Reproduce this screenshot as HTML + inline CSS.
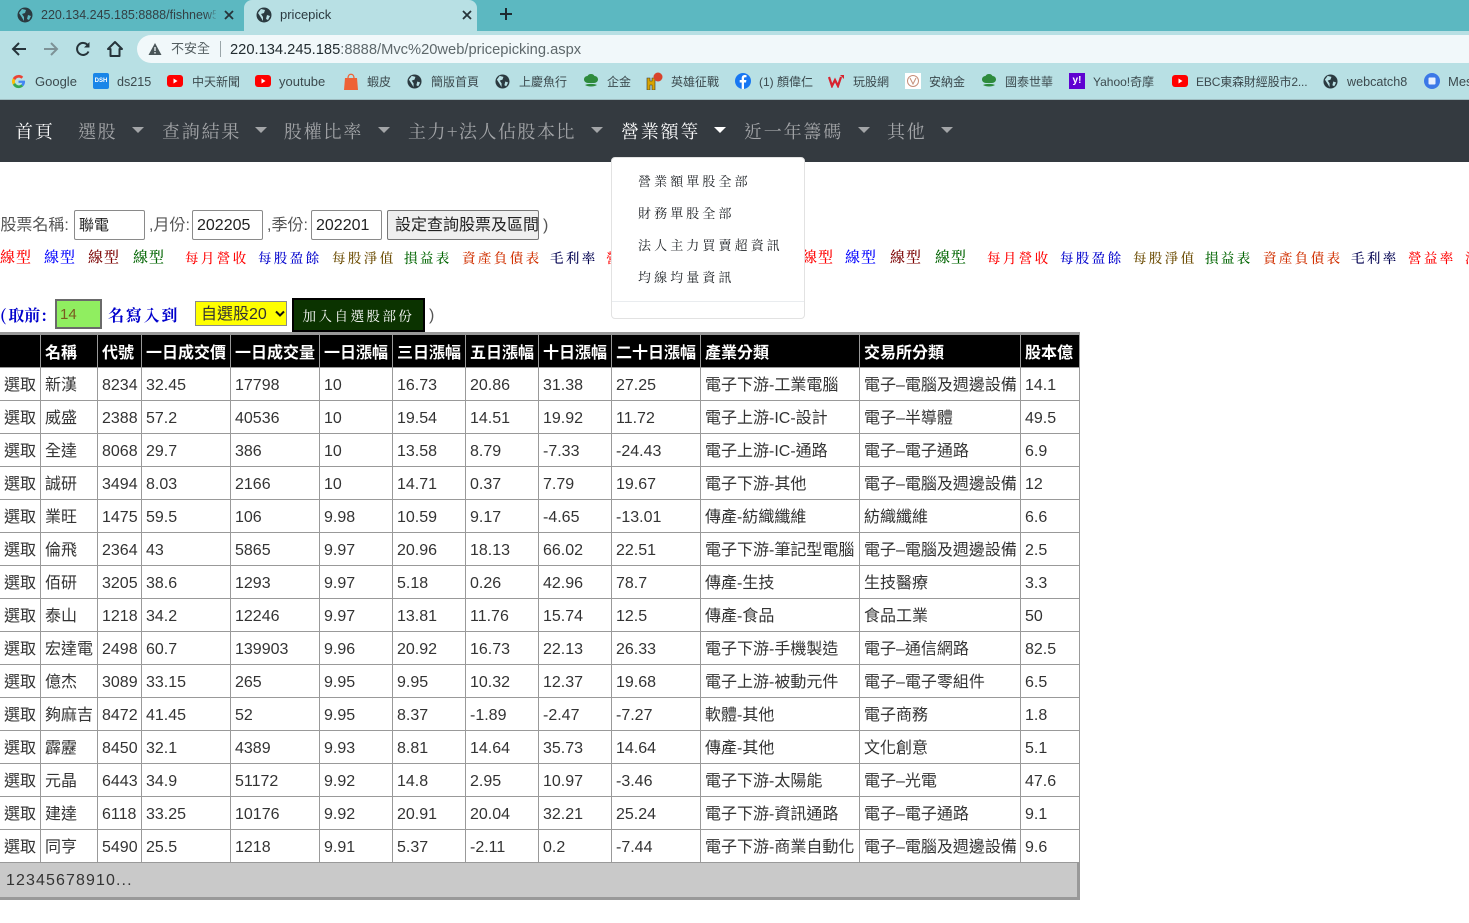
<!DOCTYPE html>
<html lang="zh-Hant"><head><meta charset="utf-8"><title>pricepick</title>
<style>
html,body{margin:0;padding:0;width:1469px;height:923px;overflow:hidden;background:#fff}
body{position:relative;font-family:"Liberation Sans","Noto Sans CJK TC",sans-serif;color:#212529}
.a{position:absolute;white-space:nowrap}
svg{position:absolute;display:block}
.bm{position:absolute;top:74px;font-size:12px;line-height:16px;color:#3c4a4e;white-space:nowrap}
.bl{font-size:13px}
.nav{position:absolute;top:119px;font:18px/24px "Noto Serif CJK TC","Noto Serif CJK SC",serif;letter-spacing:1.8px;color:#a3a5a8;white-space:nowrap}
.car{position:absolute;top:127px;width:0;height:0;border-left:6px solid transparent;border-right:6px solid transparent;border-top:6px solid #a3a5a8}
.dd{position:absolute;left:638px;font:13px/18px "Noto Serif CJK TC","Noto Serif CJK SC",serif;letter-spacing:3.1px;color:#212529;white-space:nowrap}
.lk{position:absolute;top:248px;font:500 13.5px/18px "Noto Serif CJK TC","Noto Serif CJK SC",serif;letter-spacing:2.4px;white-space:nowrap}
.ul{font-size:15px;letter-spacing:1px}
.box{position:absolute;top:210px;height:30px;border:1px solid #8a8a8a;border-radius:2px;background:#fff;font-size:16px;line-height:30px;padding-left:4px;color:#222;white-space:nowrap;box-sizing:border-box}
table{position:absolute;left:-2px;top:335px;border-collapse:collapse;table-layout:fixed;width:1081px;font-size:16px;line-height:20px}
td,th{border:1px solid #999;padding:4px 0 0 4px;white-space:nowrap;overflow:hidden;text-align:left;font-weight:400;color:#333;box-sizing:border-box;vertical-align:middle}
td:first-child{padding-left:5px}
td{height:33px;background:#fff}
th{height:32px;background:#000;color:#fff;font-weight:700;border-top:0;padding-top:6px}
</style></head><body>

<!-- browser chrome -->
<div class="a" style="left:0;top:0;width:1469px;height:31px;background:#5cb8c1"></div>
<div class="a" style="left:0;top:31px;width:1469px;height:69px;background:#b8e0e4"></div>
<div class="a" style="left:244px;top:0;width:233px;height:31px;background:#b8e0e4;border-radius:8px 8px 0 0"></div>

<svg style="left:17px;top:7px" width="16" height="16" viewBox="0 0 16 16"><circle cx="8" cy="8" r="7.5" fill="#2b3a40"/><path d="M5 2l4 1-1 3-3 1 2 3v4L4 9 2 6zM11 8l3 1-2 4-2-1z" fill="#5cb8c1"/></svg>
<div class="a" style="left:41px;top:7px;width:175px;overflow:hidden;font-size:12.5px;line-height:16px;color:#333f43">220.134.245.185:8888/fishnew5</div>
<div class="a" style="left:206px;top:5px;width:12px;height:20px;background:linear-gradient(90deg,rgba(92,184,193,0),#5cb8c1)"></div>
<svg style="left:224px;top:10px" width="10" height="10" viewBox="0 0 10 10"><path d="M1 1l8 8M9 1l-8 8" stroke="#26343a" stroke-width="1.800"/></svg>
<svg style="left:256px;top:7px" width="16" height="16" viewBox="0 0 16 16"><circle cx="8" cy="8" r="7.5" fill="#2b3a40"/><path d="M5 2l4 1-1 3-3 1 2 3v4L4 9 2 6zM11 8l3 1-2 4-2-1z" fill="#b8e0e4"/></svg>
<div class="a" style="left:280px;top:7px;font-size:13px;line-height:16px;color:#2b3a40">pricepick</div>
<svg style="left:462px;top:10px" width="10" height="10" viewBox="0 0 10 10"><path d="M1 1l8 8M9 1l-8 8" stroke="#26343a" stroke-width="1.800"/></svg>
<svg style="left:499px;top:7px" width="14" height="14" viewBox="0 0 14 14"><path d="M7 1v12M1 7h12" stroke="#1d2a30" stroke-width="2"/></svg>

<svg style="left:10px;top:40px" width="18" height="18" viewBox="0 0 18 18"><path d="M16 9H3M9 3L3 9l6 6" fill="none" stroke="#26343a" stroke-width="2"/></svg>
<svg style="left:42px;top:40px" width="18" height="18" viewBox="0 0 18 18"><path d="M2 9h13M9 3l6 6-6 6" fill="none" stroke="#7d9296" stroke-width="2"/></svg>
<svg style="left:74px;top:40px" width="18" height="18" viewBox="0 0 18 18"><path d="M14.500 11.500A6 6 0 1 1 14 5.500" fill="none" stroke="#26343a" stroke-width="2"/><path d="M15.500 2v5.500H10z" fill="#26343a"/></svg>
<svg style="left:106px;top:40px" width="18" height="18" viewBox="0 0 18 18"><path d="M9 2L2 9h2.500v7h9V9H16z" fill="none" stroke="#26343a" stroke-width="2" stroke-linejoin="round"/></svg>

<div class="a" style="left:137px;top:35px;width:1345px;height:28px;background:#f1f8fa;border-radius:14px"></div>
<svg style="left:148px;top:42px" width="14" height="14" viewBox="0 0 14 14"><path d="M7 1l6.500 12H.5z" fill="#4a5558"/><path d="M7 5v4M7 10v1.500" stroke="#f1f8fa" stroke-width="1.300"/></svg>
<div class="a" style="left:171px;top:41px;font-size:13px;line-height:16px;color:#555f62">不安全</div>
<div class="a" style="left:220px;top:41px;width:1px;height:16px;background:#9aa5a8"></div>
<div class="a" style="left:230px;top:41px;font-size:14.700px;line-height:18px;color:#5e686b"><span style="color:#222c30">220.134.245.185</span>:8888/Mvc%20web/pricepicking.aspx</div>

<!-- bookmarks -->
<svg style="left:11px;top:74px" width="15" height="15" viewBox="0 0 16 16"><path d="M8 1a7 7 0 0 1 5 2L11 5a4 4 0 0 0-6.500 1.500L2 4.500A7 7 0 0 1 8 1z" fill="#ea4335"/><path d="M2 4.500l2.500 2a4 4 0 0 0 0 3L2 11.500a7 7 0 0 1 0-7z" fill="#fbbc05"/><path d="M2 11.500l2.500-2A4 4 0 0 0 11 11l2 2a7 7 0 0 1-11-1.500z" fill="#34a853"/><path d="M15 8c0 2-.7 3.700-2 5l-2-2a3 3 0 0 0 1-1.500H8V7h6.800z" fill="#4285f4"/></svg>
<div class="bm bl" style="left:35px">Google</div>
<div class="a" style="left:93px;top:73px;width:16px;height:16px;background:#1a86e8;border-radius:2px;color:#fff;font-size:6px;font-weight:700;line-height:16px;text-align:center">DSH</div>
<div class="bm" style="left:117px;font-size:12.600px">ds215</div>
<svg style="left:167px;top:75px" width="16" height="12" viewBox="0 0 16 12"><rect width="16" height="12" rx="3" fill="#f00"/><path d="M6.500 3.500v5l4-2.500z" fill="#fff"/></svg>
<div class="bm" style="left:192px">中天新聞</div>
<svg style="left:255px;top:75px" width="16" height="12" viewBox="0 0 16 12"><rect width="16" height="12" rx="3" fill="#f00"/><path d="M6.500 3.500v5l4-2.500z" fill="#fff"/></svg>
<div class="bm bl" style="left:279px">youtube</div>
<svg style="left:344px;top:73px" width="14" height="17" viewBox="0 0 14 17"><path d="M1 5h12l1 12H0z" fill="#ee6236"/><path d="M4 5c0-5 6-5 6 0" fill="none" stroke="#ee6236" stroke-width="1.300"/></svg>
<div class="bm" style="left:367px">蝦皮</div>
<svg style="left:495px;top:74px" width="15" height="15" viewBox="0 0 16 16"><circle cx="8" cy="8" r="7.500" fill="#2b3a40"/><path d="M5 2l4 1-1 3-3 1 2 3v4L4 9 2 6zM11 8l3 1-2 4-2-1z" fill="#b8e0e4"/></svg>
<svg style="left:407px;top:74px" width="15" height="15" viewBox="0 0 16 16"><circle cx="8" cy="8" r="7.500" fill="#2b3a40"/><path d="M5 2l4 1-1 3-3 1 2 3v4L4 9 2 6zM11 8l3 1-2 4-2-1z" fill="#b8e0e4"/></svg>
<div class="bm" style="left:431px">簡版首頁</div>
<div class="bm" style="left:519px">上慶魚行</div>
<svg style="left:583px;top:74px" width="16" height="14" viewBox="0 0 16 14"><path d="M8 0c2 0 3 1 3.500 2 2 0 3.500 1.500 3.500 3.500S13 9 11 9H5C3 9 1 7.500 1 5.500S2.500 2 4.500 2C5 1 6 0 8 0z" fill="#2e8b3d"/><path d="M2 11c3-1.500 9-1.500 12 0-3 2-9 2-12 0z" fill="#2e8b3d"/></svg>
<div class="bm" style="left:607px">企金</div>
<svg style="left:646px;top:72px" width="17" height="18" viewBox="0 0 17 18"><path d="M1 6h3v3h2V6h3v12H6v-5H4v5H1z" fill="#d9a400" stroke="#333" stroke-width=".6"/><circle cx="12" cy="5" r="4.500" fill="#d8432b"/></svg>
<div class="bm" style="left:671px">英雄征戰</div>
<svg style="left:735px;top:73px" width="16" height="16" viewBox="0 0 16 16"><circle cx="8" cy="8" r="8" fill="#1877f2"/><path d="M9 16V9.500h2l.4-2.500H9V5.500c0-.8.3-1.200 1.300-1.200h1.200V2.100A12 12 0 0 0 9.800 2C8 2 6.700 3.100 6.700 5.200V7H4.700v2.500h2V16z" fill="#fff"/></svg>
<div class="bm" style="left:759px">(1) 顏偉仁</div>
<svg style="left:828px;top:74px" width="17" height="14" viewBox="0 0 17 14"><path d="M1 3l3 9 3-6 3 6 3-9" fill="none" stroke="#d8232f" stroke-width="2.200"/><path d="M12 1h4v4z" fill="#d8232f"/></svg>
<div class="bm" style="left:853px">玩股網</div>
<div class="a" style="left:905px;top:73px;width:16px;height:16px;background:#fff"></div>
<svg style="left:905px;top:73px" width="16" height="16" viewBox="0 0 16 16"><circle cx="8" cy="8" r="5.500" fill="none" stroke="#c58f7a"/><path d="M5 5l3 6 3-6" fill="none" stroke="#c58f7a"/></svg>
<div class="bm" style="left:929px">安納金</div>
<svg style="left:981px;top:74px" width="16" height="14" viewBox="0 0 16 14"><path d="M8 0c2 0 3 1 3.500 2 2 0 3.500 1.500 3.500 3.500S13 9 11 9H5C3 9 1 7.500 1 5.500S2.500 2 4.500 2C5 1 6 0 8 0z" fill="#2e8b3d"/><path d="M2 11c3-1.500 9-1.500 12 0-3 2-9 2-12 0z" fill="#2e8b3d"/></svg>
<div class="bm" style="left:1005px">國泰世華</div>
<div class="a" style="left:1069px;top:73px;width:16px;height:16px;background:#5f01d1;color:#fff;font-size:10px;font-weight:700;line-height:16px;text-align:center">y!</div>
<div class="bm" style="left:1093px">Yahoo!奇摩</div>
<svg style="left:1172px;top:75px" width="16" height="12" viewBox="0 0 16 12"><rect width="16" height="12" rx="3" fill="#f00"/><path d="M6.500 3.500v5l4-2.500z" fill="#fff"/></svg>
<div class="bm" style="left:1196px;letter-spacing:-.15px">EBC東森財經股市2...</div>
<svg style="left:1323px;top:74px" width="15" height="15" viewBox="0 0 16 16"><circle cx="8" cy="8" r="7.500" fill="#2b3a40"/><path d="M5 2l4 1-1 3-3 1 2 3v4L4 9 2 6zM11 8l3 1-2 4-2-1z" fill="#b8e0e4"/></svg>
<div class="bm" style="left:1347px;font-size:12.600px">webcatch8</div>
<svg style="left:1424px;top:73px" width="16" height="16" viewBox="0 0 16 16"><circle cx="8" cy="8" r="8" fill="#3b78e7"/><rect x="4.500" y="4.500" width="7" height="7" rx="1" fill="#e8f0fe"/></svg>
<div class="bm bl" style="left:1448px">Mes</div>
<div class="a" style="left:0;top:99px;width:1469px;height:1px;background:#9fbcc0"></div>

<!-- navbar -->
<div class="a" style="left:0;top:100px;width:1469px;height:62px;background:#343a40"></div>
<div class="nav" style="left:15px;color:#fff">首頁</div>
<div class="nav" style="left:78px">選股</div><div class="car" style="left:132px"></div>
<div class="nav" style="left:162px">查詢結果</div><div class="car" style="left:255px"></div>
<div class="nav" style="left:284px">股權比率</div><div class="car" style="left:378px"></div>
<div class="nav" style="left:408px;letter-spacing:1.500px">主力+法人佔股本比</div><div class="car" style="left:591px"></div>
<div class="nav" style="left:621px;color:#fff">營業額等</div><div class="car" style="left:714px;border-top-color:#fff"></div>
<div class="nav" style="left:744px">近一年籌碼</div><div class="car" style="left:858px"></div>
<div class="nav" style="left:887px">其他</div><div class="car" style="left:941px"></div>

<!-- form row -->
<div class="a" style="left:-5px;top:216px;font-size:16px;line-height:20px;color:#555">(股票名稱:</div>
<div class="box" style="left:74px;width:71px;font-size:15px">聯電</div>
<div class="a" style="left:149px;top:216px;font-size:16px;line-height:20px;color:#555">,月份:</div>
<div class="box" style="left:192px;width:71px">202205</div>
<div class="a" style="left:267px;top:216px;font-size:16px;line-height:20px;color:#555">,季份:</div>
<div class="box" style="left:311px;width:71px">202201</div>
<div class="box" style="left:387px;width:152px;background:#efefef;padding-left:7px;color:#222;border-color:#777">設定查詢股票及區間</div>
<div class="a" style="left:543px;top:216px;font-size:16px;line-height:20px;color:#555">)</div>

<!-- links row -->
<div class="lk ul" style="left:0;color:#f00">線型</div>
<div class="lk ul" style="left:44px;color:#00f">線型</div>
<div class="lk ul" style="left:88px;color:#7a0000">線型</div>
<div class="lk ul" style="left:133px;color:#006400">線型</div>
<div class="lk" style="left:185px;color:#f00">每月營收</div>
<div class="lk" style="left:258px;color:#00c">每股盈餘</div>
<div class="lk" style="left:332px;color:#6a4a00">每股淨值</div>
<div class="lk" style="left:404px;color:#006400">損益表</div>
<div class="lk" style="left:462px;color:#d03000">資產負債表</div>
<div class="lk" style="left:550px;color:#000050">毛利率</div>
<div class="lk" style="left:606px;color:#f00">營</div>
<div class="lk ul" style="left:802px;color:#f00">線型</div>
<div class="lk ul" style="left:845px;color:#00f">線型</div>
<div class="lk ul" style="left:890px;color:#7a0000">線型</div>
<div class="lk ul" style="left:935px;color:#006400">線型</div>
<div class="lk" style="left:987px;color:#f00">每月營收</div>
<div class="lk" style="left:1060px;color:#00c">每股盈餘</div>
<div class="lk" style="left:1133px;color:#6a4a00">每股淨值</div>
<div class="lk" style="left:1205px;color:#006400">損益表</div>
<div class="lk" style="left:1263px;color:#d03000">資產負債表</div>
<div class="lk" style="left:1351px;color:#000050">毛利率</div>
<div class="lk" style="left:1408px;color:#f00">營益率</div>
<div class="lk" style="left:1465px;color:#f00">法</div>

<!-- dropdown -->
<div class="a" style="left:611px;top:157px;width:194px;height:162px;background:#fff;border:1px solid #e2e2e2;border-radius:4px;box-sizing:border-box"></div>
<div class="a" style="left:612px;top:301px;width:192px;height:1px;background:#e9ecef"></div>
<div class="dd" style="top:172px">營業額單股全部</div>
<div class="dd" style="top:204px">財務單股全部</div>
<div class="dd" style="top:236px">法人主力買賣超資訊</div>
<div class="dd" style="top:268px">均線均量資訊</div>

<!-- pick row -->
<div class="a" style="left:0;top:304px;font:700 16px/22px 'Noto Serif CJK TC','Noto Serif CJK SC',serif;letter-spacing:1px;color:#00c">(<span style="letter-spacing:0;margin-left:1px">取</span><span>前</span>:</div>
<div class="a" style="left:55px;top:299px;width:47px;height:30px;background:#90ee60;border:2px solid #6a6a6a;box-sizing:border-box;font-size:15px;line-height:28px;padding-left:3px;color:#7a5a20">14</div>
<div class="a" style="left:108px;top:304px;font:700 16px/22px 'Noto Serif CJK TC','Noto Serif CJK SC',serif;letter-spacing:1.800px;color:#00c">名寫入到</div>
<div class="a" style="left:195px;top:301px;width:92px;height:25px;background:#ffff00;border:1px solid #8a8a8a;box-sizing:border-box;font-size:16px;line-height:26px;padding-left:5px;color:#333">自選股20</div>
<svg style="left:275px;top:310px" width="10" height="8" viewBox="0 0 10 8"><path d="M1 1.500l4 4 4-4" fill="none" stroke="#111" stroke-width="2"/></svg>
<div class="a" style="left:292px;top:298px;width:133px;height:34px;background:#0b3300;border:2px solid #000;box-sizing:border-box;color:#fff;font:13.500px/30px 'Noto Serif CJK TC','Noto Serif CJK SC',serif;letter-spacing:2.500px;text-align:center">加入自選股部份</div>
<div class="a" style="left:429px;top:306px;font-size:16px;line-height:20px;color:#555">)</div>

<!-- table -->
<div class="a" style="left:0;top:332px;width:1080px;height:568px;background:#c9c9c9;border-top:3px solid #999;border-bottom:3px solid #999;border-right:3px solid #999;box-sizing:border-box"></div>
<table>
<colgroup><col style="width:42px"><col style="width:57px"><col style="width:44px"><col style="width:89px"><col style="width:89px"><col style="width:73px"><col style="width:73px"><col style="width:73px"><col style="width:73px"><col style="width:89px"><col style="width:159px"><col style="width:161px"><col style="width:59px"></colgroup>
<tr><th></th><th>名稱</th><th>代號</th><th>一日成交價</th><th>一日成交量</th><th>一日漲幅</th><th>三日漲幅</th><th>五日漲幅</th><th>十日漲幅</th><th>二十日漲幅</th><th>產業分類</th><th>交易所分類</th><th>股本億</th></tr>
<tr><td>選取</td><td>新漢</td><td>8234</td><td>32.45</td><td>17798</td><td>10</td><td>16.73</td><td>20.86</td><td>31.38</td><td>27.25</td><td>電子下游-工業電腦</td><td>電子–電腦及週邊設備</td><td>14.1</td></tr>
<tr><td>選取</td><td>威盛</td><td>2388</td><td>57.2</td><td>40536</td><td>10</td><td>19.54</td><td>14.51</td><td>19.92</td><td>11.72</td><td>電子上游-IC-設計</td><td>電子–半導體</td><td>49.5</td></tr>
<tr><td>選取</td><td>全達</td><td>8068</td><td>29.7</td><td>386</td><td>10</td><td>13.58</td><td>8.79</td><td>-7.33</td><td>-24.43</td><td>電子上游-IC-通路</td><td>電子–電子通路</td><td>6.9</td></tr>
<tr><td>選取</td><td>誠研</td><td>3494</td><td>8.03</td><td>2166</td><td>10</td><td>14.71</td><td>0.37</td><td>7.79</td><td>19.67</td><td>電子下游-其他</td><td>電子–電腦及週邊設備</td><td>12</td></tr>
<tr><td>選取</td><td>業旺</td><td>1475</td><td>59.5</td><td>106</td><td>9.98</td><td>10.59</td><td>9.17</td><td>-4.65</td><td>-13.01</td><td>傳產-紡織纖維</td><td>紡織纖維</td><td>6.6</td></tr>
<tr><td>選取</td><td>倫飛</td><td>2364</td><td>43</td><td>5865</td><td>9.97</td><td>20.96</td><td>18.13</td><td>66.02</td><td>22.51</td><td>電子下游-筆記型電腦</td><td>電子–電腦及週邊設備</td><td>2.5</td></tr>
<tr><td>選取</td><td>佰研</td><td>3205</td><td>38.6</td><td>1293</td><td>9.97</td><td>5.18</td><td>0.26</td><td>42.96</td><td>78.7</td><td>傳產-生技</td><td>生技醫療</td><td>3.3</td></tr>
<tr><td>選取</td><td>泰山</td><td>1218</td><td>34.2</td><td>12246</td><td>9.97</td><td>13.81</td><td>11.76</td><td>15.74</td><td>12.5</td><td>傳產-食品</td><td>食品工業</td><td>50</td></tr>
<tr><td>選取</td><td>宏達電</td><td>2498</td><td>60.7</td><td>139903</td><td>9.96</td><td>20.92</td><td>16.73</td><td>22.13</td><td>26.33</td><td>電子下游-手機製造</td><td>電子–通信網路</td><td>82.5</td></tr>
<tr><td>選取</td><td>億杰</td><td>3089</td><td>33.15</td><td>265</td><td>9.95</td><td>9.95</td><td>10.32</td><td>12.37</td><td>19.68</td><td>電子上游-被動元件</td><td>電子–電子零組件</td><td>6.5</td></tr>
<tr><td>選取</td><td>夠麻吉</td><td>8472</td><td>41.45</td><td>52</td><td>9.95</td><td>8.37</td><td>-1.89</td><td>-2.47</td><td>-7.27</td><td>軟體-其他</td><td>電子商務</td><td>1.8</td></tr>
<tr><td>選取</td><td>霹靂</td><td>8450</td><td>32.1</td><td>4389</td><td>9.93</td><td>8.81</td><td>14.64</td><td>35.73</td><td>14.64</td><td>傳產-其他</td><td>文化創意</td><td>5.1</td></tr>
<tr><td>選取</td><td>元晶</td><td>6443</td><td>34.9</td><td>51172</td><td>9.92</td><td>14.8</td><td>2.95</td><td>10.97</td><td>-3.46</td><td>電子下游-太陽能</td><td>電子–光電</td><td>47.6</td></tr>
<tr><td>選取</td><td>建達</td><td>6118</td><td>33.25</td><td>10176</td><td>9.92</td><td>20.91</td><td>20.04</td><td>32.21</td><td>25.24</td><td>電子下游-資訊通路</td><td>電子–電子通路</td><td>9.1</td></tr>
<tr><td>選取</td><td>同亨</td><td>5490</td><td>25.5</td><td>1218</td><td>9.91</td><td>5.37</td><td>-2.11</td><td>0.2</td><td>-7.44</td><td>電子下游-商業自動化</td><td>電子–電腦及週邊設備</td><td>9.6</td></tr>
</table>
<div class="a" style="left:6px;top:871px;font-size:16px;line-height:20px;letter-spacing:1.100px;color:#333">12345678910...</div>
</body></html>
